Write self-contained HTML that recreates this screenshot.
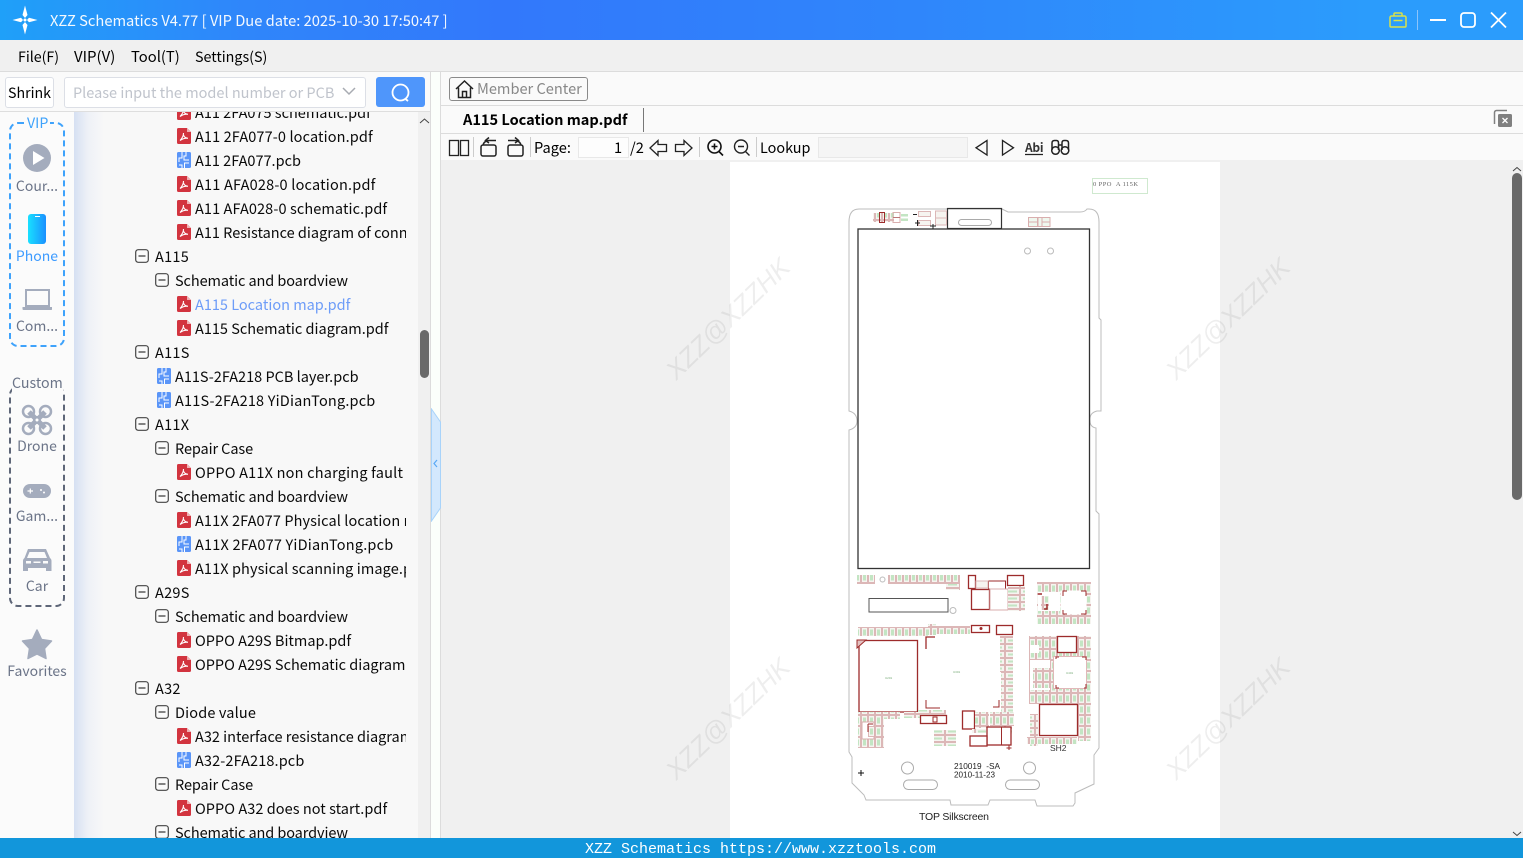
<!DOCTYPE html>
<html><head><meta charset="utf-8"><title>XZZ Schematics</title>
<style>
html,body{margin:0;padding:0;width:1523px;height:858px;overflow:hidden;background:#f0f0f0}
body{font-family:"Liberation Sans","Noto Sans CJK SC",sans-serif;font-size:15px;color:#000;position:relative}
.a{position:absolute}
.t{position:absolute;white-space:nowrap;line-height:20px;font-family:"Noto Sans CJK SC","Liberation Sans",sans-serif;font-size:14.6px}
.lab{position:absolute;left:0;width:74px;text-align:center;color:#6b7488;font-size:14px;line-height:20px;font-family:"Noto Sans CJK SC","Liberation Sans",sans-serif;white-space:nowrap}
#tree{position:absolute;left:74px;top:112px;width:344px;height:726px;overflow:hidden;background:linear-gradient(90deg,#d6e0f2 0,#eef1f7 14px,#f8f8f8 30px)}
#clip{position:absolute;left:0;top:-12px;width:332px;overflow:hidden}
.r{height:24px;line-height:26px;white-space:nowrap;position:relative;font-family:"Noto Sans CJK SC","Liberation Sans",sans-serif;font-size:14.5px;color:#0a0a0a}
.r svg{position:absolute;top:4px}
.l1{padding-left:81px;letter-spacing:.27px}.l1 svg{left:61px}
.l2{padding-left:101px}.l2 svg{left:81px}
.l3{padding-left:121px}.l3 svg{left:103px}
.l2p{padding-left:101px}.l2p svg{left:83px}
</style></head><body>
<svg width="0" height="0" style="position:absolute"><defs>
<symbol id="p" viewBox="0 0 14 16"><path d="M1.500 0H10L14 4V14.500A1.500 1.500 0 0 1 12.500 16H1.500A1.500 1.500 0 0 1 0 14.500V1.500A1.500 1.500 0 0 1 1.500 0Z" fill="#d2343f"/><path d="M10 0L14 4H10Z" fill="#f0b0b4"/><path d="M6.500 5C6.500 8 5 10.500 3 12.500M6.500 7C7 9 8.500 10 11 10.300C8.500 10 5.500 10.800 3 12.500" fill="none" stroke="#fff" stroke-width="1.100"/></symbol>
<symbol id="c" viewBox="0 0 14 16"><rect width="14" height="16" rx="1.500" fill="#5a95f8"/><path d="M5 0V6H2V10M9 0V4H7V8H12M7.500 16V11H12M2 13H5V16" fill="none" stroke="#fff" stroke-width="1"/></symbol>
<symbol id="m" viewBox="0 0 14 16"><rect x=".7" y="1.700" width="12.600" height="12.600" rx="2.500" fill="#fafafa" stroke="#444" stroke-width="1.200"/><path d="M3.500 8H10.500" stroke="#333" stroke-width="1.200"/></symbol>
<pattern id="cv" width="7" height="11" patternUnits="userSpaceOnUse"><rect width="7" height="11" fill="#f6f4f0"/><rect x=".5" y=".5" width="6" height="10" fill="none" stroke="#dcb7b7"/><rect x="2" y="2.500" width="3" height="6" fill="#c3e5c3"/></pattern>
<pattern id="ch" width="15" height="7" patternUnits="userSpaceOnUse"><rect width="15" height="7" fill="#f6f4f0"/><rect x=".5" y=".5" width="14" height="6" fill="none" stroke="#dcb7b7"/><rect x="3" y="2.500" width="9" height="2" fill="#c3e5c3"/></pattern>
</defs></svg>

<!-- title bar -->
<div class="a" style="left:0;top:0;width:1523px;height:40px;background:linear-gradient(90deg,#1fa0f9 0,#2f86fa 16%,#3278fb 33%,#2f86fb 60%,#2b9cfc 90%)"></div>
<svg class="a" style="left:12px;top:5px" width="28" height="30" viewBox="0 0 28 30"><path d="M13 .5L15.500 10L13 13L10.500 10ZM13 29.500L15.500 20L13 17L10.500 20ZM.5 15L9 12.800L11 15L9 17.200ZM25.500 15L17 12.800L15 15L17 17.200Z" fill="#fff"/><circle cx="13" cy="15" r="1.500" fill="#fff"/></svg>
<div class="t" style="left:50px;top:11px;color:#fff;font-size:14.7px;opacity:.95">XZZ Schematics V4.77 [ VIP Due date: 2025-10-30 17:50:47 ]</div>
<svg class="a" style="left:1380px;top:0" width="143" height="40" viewBox="1380 0 143 40" fill="none">
<path d="M1391.500 16H1404.500A1.500 1.500 0 0 1 1406 17.500V26A1 1 0 0 1 1405 27H1391A1 1 0 0 1 1390 26V17.500A1.500 1.500 0 0 1 1391.500 16ZM1394 16V14A1 1 0 0 1 1395 13H1401A1 1 0 0 1 1402 14V16M1393.500 20.500H1402.500" stroke="#d9e24a" stroke-width="1.500"/>
<path d="M1417.500 10V30" stroke="#8cc4fb"/>
<path d="M1430 20H1446" stroke="#fff" stroke-width="2"/>
<rect x="1461" y="13" width="14" height="14" rx="3" stroke="#fff" stroke-width="1.800"/>
<path d="M1491 12.500L1506 27.500M1506 12.500L1491 27.500" stroke="#fff" stroke-width="1.800"/>
</svg>

<!-- menu -->
<div class="a" style="left:0;top:40px;width:1523px;height:31px;background:#f0f0f0;border-bottom:1px solid #dcdcdc"></div>
<div class="t" style="left:18px;top:47px;font-size:14.200px">File(F)</div>
<div class="t" style="left:74px;top:47px;font-size:15px">VIP(V)</div>
<div class="t" style="left:131px;top:47px;font-size:14.800px">Tool(T)</div>
<div class="t" style="left:195px;top:47px;font-size:14.300px">Settings(S)</div>

<!-- search row -->
<div class="a" style="left:0;top:72px;width:430px;height:39px;background:#fafafa;border-bottom:1px solid #dedede"></div>
<div class="a" style="left:5px;top:77px;width:47px;height:29px;background:#fff;border:1px solid #dcdfe6;border-radius:3px"></div>
<div class="t" style="left:8px;top:83px;font-size:14.200px">Shrink</div>
<div class="a" style="left:64px;top:77px;width:300px;height:29px;background:#fff;border:1px solid #dcdfe6;border-radius:3px"></div>
<div class="t" style="left:73px;top:83px;color:#c0c4cc;font-size:14.500px">Please input the model number or PCB</div>
<svg class="a" style="left:342px;top:86px" width="14" height="12" fill="none"><path d="M1 2L7 8L13 2" stroke="#a8abb2" stroke-width="1.500"/></svg>
<div class="a" style="left:376px;top:77px;width:49px;height:30px;background:#4f96fb;border-radius:3px"></div>
<svg class="a" style="left:390px;top:82px" width="22" height="22" fill="none"><circle cx="10.500" cy="10.500" r="8" stroke="#fff" stroke-width="1.800"/><path d="M15.500 17L18 19" stroke="#fff" stroke-width="1.800"/></svg>

<!-- sidebar -->
<div class="a" style="left:0;top:112px;width:74px;height:726px;background:#fbfbfb"></div>
<div class="a" style="left:9px;top:122px;width:52px;height:221px;border:2px dashed #3ea2fb;border-radius:9px"></div>
<div class="t" style="left:25px;top:113px;color:#3ea2fb;background:#fbfbfb;padding:0 2px;font-size:14.200px">VIP</div>
<div class="a" style="left:9px;top:386px;width:52px;height:217px;border:2px dashed #5e6678;border-radius:9px"></div>
<div class="t" style="left:12px;top:373px;color:#6b7488;background:#fbfbfb;font-size:14.200px">Custom</div>
<svg class="a" style="left:0;top:112px" width="74" height="560" viewBox="0 112 74 560">
<defs><linearGradient id="ph" x1="0" x2="1"><stop offset="0" stop-color="#19e0ff"/><stop offset="1" stop-color="#1a90ff"/></linearGradient></defs>
<circle cx="37" cy="158" r="14" fill="#a4acbd"/><path d="M33 151V165L44.500 158Z" fill="#fff"/>
<rect x="28" y="214" width="18" height="30" rx="3" fill="url(#ph)"/><rect x="35" y="216" width="5" height="1" fill="#fff"/>
<path d="M26 290H49V306H26Z" fill="none" stroke="#a4acbd" stroke-width="2"/><path d="M22.500 307H52V309.500Q52 310 51 310H24Q22.500 310 22.500 309Z" fill="#a4acbd"/>
<g fill="none" stroke="#a4acbd"><circle cx="28.500" cy="411.500" r="5.500" stroke-width="2.500"/><circle cx="45.500" cy="411.500" r="5.500" stroke-width="2.500"/><circle cx="28.500" cy="428.500" r="5.500" stroke-width="2.500"/><circle cx="45.500" cy="428.500" r="5.500" stroke-width="2.500"/><path d="M29 412L45 428M45 412L29 428" stroke-width="5"/></g><circle cx="37" cy="420" r="4" fill="#a4acbd"/><circle cx="37" cy="420" r="1.500" fill="#fff"/>
<rect x="23" y="484" width="28" height="14" rx="7" fill="#a4acbd"/><path d="M27.500 491H33M30.300 488.500V493.500" stroke="#fff" stroke-width="1.200"/><circle cx="41" cy="490" r="1" fill="#fff"/><circle cx="44" cy="492.500" r="1" fill="#fff"/>
<path d="M28 549H46L50 558Q51.500 559 51.500 561V571H46V568H28V571H23V561Q23 559 24.500 558Z" fill="#a4acbd"/><path d="M29.500 552H44.500L47 558H27Z" fill="#fbfbfb"/><rect x="26" y="561" width="5" height="2.500" fill="#fbfbfb"/><rect x="43" y="561" width="5" height="2.500" fill="#fbfbfb"/><rect x="33.500" y="561.500" width="7" height="1.500" fill="#fbfbfb"/>
<path d="M37 630L41.500 639.500L51.500 641L44.500 648.500L46 658.500L37 654L28 658.500L29.500 648.500L22.500 641L32.500 639.500Z" fill="#a4acbd" stroke="#a4acbd" stroke-width="1.500" stroke-linejoin="round"/>
</svg>
<div class="lab" style="top:176px">Cour...</div>
<div class="lab" style="top:246px;color:#3d9bff">Phone</div>
<div class="lab" style="top:316px">Com...</div>
<div class="lab" style="top:436px">Drone</div>
<div class="lab" style="top:506px">Gam...</div>
<div class="lab" style="top:576px">Car</div>
<div class="lab" style="top:661px">Favorites</div>

<!-- tree -->
<div id="tree"><div id="clip">
<div class="r l3"><svg width="14" height="16"><use href="#p"/></svg>A11 2FA075 schematic.pdf</div>
<div class="r l3" style="letter-spacing:.12px"><svg width="14" height="16"><use href="#p"/></svg>A11 2FA077-0 location.pdf</div>
<div class="r l3"><svg width="14" height="16"><use href="#c"/></svg>A11 2FA077.pcb</div>
<div class="r l3" style="letter-spacing:.2px"><svg width="14" height="16"><use href="#p"/></svg>A11 AFA028-0 location.pdf</div>
<div class="r l3" style="letter-spacing:.1px"><svg width="14" height="16"><use href="#p"/></svg>A11 AFA028-0 schematic.pdf</div>
<div class="r l3"><svg width="14" height="16"><use href="#p"/></svg>A11 Resistance diagram of connector.pdf</div>
<div class="r l1"><svg width="14" height="16"><use href="#m"/></svg>A115</div>
<div class="r l2" style="letter-spacing:-.09px"><svg width="14" height="16"><use href="#m"/></svg>Schematic and boardview</div>
<div class="r l3" style="color:#6d9cf8"><svg width="14" height="16"><use href="#p"/></svg>A115 Location map.pdf</div>
<div class="r l3"><svg width="14" height="16"><use href="#p"/></svg>A115 Schematic diagram.pdf</div>
<div class="r l1"><svg width="14" height="16"><use href="#m"/></svg>A11S</div>
<div class="r l2p"><svg width="14" height="16"><use href="#c"/></svg>A11S-2FA218 PCB layer.pcb</div>
<div class="r l2p" style="letter-spacing:.19px"><svg width="14" height="16"><use href="#c"/></svg>A11S-2FA218 YiDianTong.pcb</div>
<div class="r l1"><svg width="14" height="16"><use href="#m"/></svg>A11X</div>
<div class="r l2" style="letter-spacing:-.1px"><svg width="14" height="16"><use href="#m"/></svg>Repair Case</div>
<div class="r l3" style="letter-spacing:.2px"><svg width="14" height="16"><use href="#p"/></svg>OPPO A11X non charging fault</div>
<div class="r l2" style="letter-spacing:-.09px"><svg width="14" height="16"><use href="#m"/></svg>Schematic and boardview</div>
<div class="r l3" style="letter-spacing:.1px"><svg width="14" height="16"><use href="#p"/></svg>A11X 2FA077 Physical location map.pdf</div>
<div class="r l3" style="letter-spacing:.2px"><svg width="14" height="16"><use href="#c"/></svg>A11X 2FA077 YiDianTong.pcb</div>
<div class="r l3" style="letter-spacing:.1px"><svg width="14" height="16"><use href="#p"/></svg>A11X physical scanning image.pdf</div>
<div class="r l1"><svg width="14" height="16"><use href="#m"/></svg>A29S</div>
<div class="r l2" style="letter-spacing:-.09px"><svg width="14" height="16"><use href="#m"/></svg>Schematic and boardview</div>
<div class="r l3"><svg width="14" height="16"><use href="#p"/></svg>OPPO A29S Bitmap.pdf</div>
<div class="r l3"><svg width="14" height="16"><use href="#p"/></svg>OPPO A29S Schematic diagram.pdf</div>
<div class="r l1"><svg width="14" height="16"><use href="#m"/></svg>A32</div>
<div class="r l2" style="letter-spacing:.15px"><svg width="14" height="16"><use href="#m"/></svg>Diode value</div>
<div class="r l3"><svg width="14" height="16"><use href="#p"/></svg>A32 interface resistance diagram.pdf</div>
<div class="r l3" style="letter-spacing:.12px"><svg width="14" height="16"><use href="#c"/></svg>A32-2FA218.pcb</div>
<div class="r l2" style="letter-spacing:-.1px"><svg width="14" height="16"><use href="#m"/></svg>Repair Case</div>
<div class="r l3" style="letter-spacing:.05px"><svg width="14" height="16"><use href="#p"/></svg>OPPO A32 does not start.pdf</div>
<div class="r l2" style="letter-spacing:-.09px"><svg width="14" height="16"><use href="#m"/></svg>Schematic and boardview</div>
</div></div>
<!-- tree scrollbar -->
<div class="a" style="left:418px;top:112px;width:12px;height:726px;background:#f0f0f0"></div>
<svg class="a" style="left:418px;top:114px" width="13" height="12" fill="none"><path d="M2 9L6.500 5L11 9" stroke="#444"/></svg>
<div class="a" style="left:420px;top:330px;width:9px;height:48px;background:#696969;border-radius:5px"></div>
<!-- divider -->
<div class="a" style="left:430px;top:72px;width:9px;height:766px;background:#fbfffb;border-left:1px solid #dcdcdc;border-right:1px solid #dcdcdc"></div>
<svg class="a" style="left:431px;top:408px" width="10" height="114"><path d="M0.500 1L9.500 14V100L0.500 113Z" fill="#d3e8fd" stroke="#a8d3fa"/><path d="M6 52L3 55.500L6 59" fill="none" stroke="#5aa9f5" stroke-width="1.200"/></svg>

<!-- right header -->
<div class="a" style="left:441px;top:72px;width:1082px;height:33px;background:#fafafa;border-bottom:1px solid #dcdcdc"></div>
<div class="a" style="left:441px;top:106px;width:1082px;height:27px;background:#fafafa;border-bottom:1px solid #dcdcdc"></div>
<div class="a" style="left:441px;top:134px;width:1082px;height:26px;background:#fafafa"></div>
<div class="a" style="left:449px;top:77px;width:137px;height:22px;border:1px solid #8a8a8a;border-radius:3px;background:#fafafa"></div>
<svg class="a" style="left:455px;top:79px" width="20" height="20" fill="none" stroke="#222" stroke-width="1.500"><path d="M1 10L9.500 2L18 10M3.500 8.500V18.500H15.500V8.500M7.500 18.500V12.500H11.500V18.500"/></svg>
<div class="t" style="left:477px;top:79px;color:#888;font-size:14.600px">Member Center</div>
<div class="t" style="left:463px;top:110px;font-weight:bold;font-size:14.560px">A115 Location map.pdf</div>
<div class="a" style="left:643px;top:108px;width:1px;height:24px;background:#777"></div>
<svg class="a" style="left:1493px;top:109px" width="20" height="20"><path d="M1.500 15V3.500A2 2 0 0 1 3.500 1.500H14" fill="none" stroke="#808080" stroke-width="1.500"/><rect x="5" y="5" width="14" height="13" rx="1.500" fill="#808080"/><path d="M9.500 9L14.500 14M14.500 9L9.500 14" stroke="#fff" stroke-width="1.300"/></svg>

<!-- toolbar -->
<svg class="a" style="left:442px;top:134px" width="640" height="27" viewBox="442 134 640 27" fill="none" stroke="#222" stroke-width="1.500">
<rect x="449.500" y="140.500" width="9" height="15" stroke-width="1.300"/><rect x="460.500" y="140.500" width="8" height="15" stroke-width="1.300"/>
<path d="M473.500 137V157M530.500 137V157M699.500 137V157M756.500 137V157" stroke="#ccc" stroke-width="1"/>
<rect x="481" y="145" width="15" height="11" rx="2"/><path d="M483 145Q484 141 489 140.500H496M489 137.500L485.500 140.500L489 143"/>
<rect x="508" y="145" width="15" height="11" rx="2"/><path d="M521 145Q520 141 515 140.500H508M515 137.500L518.500 140.500L515 143"/>
<path d="M650 148L658 140.500V144.500H666.500V151.500H658V155.500Z" stroke-width="1.300"/>
<path d="M692 148L684 140.500V144.500H675.500V151.500H684V155.500Z" stroke-width="1.300"/>
<circle cx="714.500" cy="146.500" r="6.500" stroke="#111" stroke-width="1.600"/><path d="M719 151.500L723 155.500M711.500 146.500H717.500M714.500 143.500V149.500" stroke="#111" stroke-width="1.600"/>
<circle cx="741" cy="146.500" r="6.500" stroke-width="1.400"/><path d="M745.500 151.500L749.500 155.500M738 146.500H744" stroke-width="1.400"/>
<path d="M987 140.500V155L976 147.800Z" stroke-width="1.300"/><path d="M1002.500 140.500V155L1013.500 147.800Z" stroke-width="1.300"/>
<path d="M1025 154.500H1043" stroke-width="1.200"/>
<circle cx="1055.500" cy="150.500" r="3.800"/><circle cx="1065" cy="150.500" r="3.800"/><path d="M1052 150V143Q1052 140.500 1054.500 140.500H1056.500Q1058.500 140.500 1058.500 143V150M1062 150V143Q1062 140.500 1064 140.500H1066Q1068.500 140.500 1068.500 143V150M1058.500 145H1062"/>
</svg>
<div class="t" style="left:534px;top:138px">Page:</div>
<div class="a" style="left:578px;top:137px;width:49px;height:19px;background:#fdfdfd;border:1px solid #e8e8e8"></div>
<div class="t" style="left:614px;top:138px">1</div>
<div class="t" style="left:630px;top:138px">/2</div>
<div class="t" style="left:760px;top:138px;font-size:14.400px">Lookup</div>
<div class="a" style="left:818px;top:137px;width:148px;height:19px;background:#f5f5f5;border:1px solid #e8e8e8"></div>
<div class="t" style="left:1025px;top:138px;font-size:12px;font-weight:bold;color:#333;letter-spacing:-.3px">Abi</div>

<!-- viewer -->
<div class="a" style="left:441px;top:160px;width:1070px;height:678px;background:#f0f0f0"></div>
<div class="a" style="left:730px;top:162px;width:490px;height:676px;background:#fff"></div>

<svg class="a" style="left:442px;top:160px" width="1069" height="678" viewBox="442 160 1069 678" fill="none">
<!-- label box -->
<rect x="1092.500" y="178.500" width="55" height="15" stroke="#cfe9cf"/>
<text x="1093" y="186" font-family="Liberation Serif,serif" font-size="6.500" fill="#666" letter-spacing=".4">0 PPO&#160;&#160;A 115K</text>
<!-- outline -->
<path d="M859 209H947V209M1002 209L1008 212H1080Q1085 212 1087 209H1089Q1099 209 1099 222V318L1101 320V411H1097Q1089 413 1090 421Q1090 427 1096 428V511L1099 514V748L1094 755V784L1075 793V803L1073 806H1037L1035 800H990L988 805H951L950 800H866L864 795L852 783V757L849 752V430Q857 428 857 421Q857 413 849 411V222Q849 209 859 209Z" stroke="#bcbcbc" stroke-width="1"/>
<!-- top notch -->
<rect x="947.500" y="208.500" width="54" height="20" stroke="#333" stroke-width="1.200"/>
<rect x="958.500" y="219.500" width="33" height="6" rx="3" stroke="#aaa"/>
<!-- screen -->
<rect x="858" y="229" width="231.500" height="339.500" stroke="#333" stroke-width="1.300"/>
<circle cx="1027.500" cy="251" r="3" stroke="#bbb"/><circle cx="1050.500" cy="251" r="3" stroke="#bbb"/>
<!-- top comps -->
<rect x="873" y="213" width="21" height="9" fill="url(#cv)"/>
<rect x="879.500" y="212.500" width="5" height="10" stroke="#9d2b2b"/>
<rect x="893" y="212.500" width="7" height="10" stroke="#d9aeae"/>
<path d="M893 217.500H900" stroke="#b77"/><rect x="901" y="214" width="7" height="2.500" fill="#c3e5c3"/><rect x="901" y="218.500" width="7" height="2.500" fill="#c3e5c3"/>
<rect x="918.500" y="211.500" width="12" height="5" fill="#f6f4f0" stroke="#dcb7b7"/><rect x="918.500" y="220.500" width="12" height="5" fill="#f6f4f0" stroke="#dcb7b7"/>
<path d="M913 214.500H917M915 223H920M917.500 220V226M933 224V229M936 226H930" stroke="#222"/>
<rect x="935.500" y="211" width="11" height="7" fill="#f6f4f0" stroke="#dcb7b7"/><rect x="935.500" y="218" width="11" height="7" fill="#f6f4f0" stroke="#dcb7b7"/>
<g fill="#eef7ee" stroke="#d9aeae"><rect x="1028.500" y="217.500" width="9" height="4.500"/><rect x="1028.500" y="222" width="9" height="4.500"/><rect x="1038" y="217.500" width="4" height="9"/><rect x="1042" y="217.500" width="8" height="4.500"/><rect x="1042" y="222" width="8" height="4.500"/></g>
<!-- row under screen -->
<rect x="857" y="575" width="18" height="9" fill="url(#cv)"/><circle cx="882.500" cy="579.500" r="2.500" stroke="#bbb"/>
<rect x="888" y="575" width="72" height="9" fill="url(#cv)"/><rect x="946" y="584" width="14" height="6" fill="url(#ch)"/>
<rect x="869" y="598.500" width="79" height="13.500" stroke="#555" stroke-width="1"/><circle cx="953" cy="610.500" r="3" stroke="#bbb"/>
<!-- block 2 -->
<rect x="968.500" y="575.500" width="7" height="13" stroke="#9d2b2b" stroke-width="1.300"/>
<rect x="971.500" y="589.500" width="18" height="20" stroke="#9d2b2b" stroke-width="1.300"/>
<rect x="988.500" y="581" width="17" height="8" stroke="#9d2b2b" stroke-width="1"/>
<rect x="1007.500" y="575.500" width="16" height="10" stroke="#9d2b2b" stroke-width="1.300"/>
<rect x="976" y="581" width="12" height="7" fill="#f6f4f0" stroke="#dcb7b7"/><rect x="990" y="589" width="18" height="21" stroke="#d9aeae"/>
<rect x="1008" y="586" width="17" height="25" fill="url(#ch)"/>
<!-- block 3 -->
<rect x="1037" y="582" width="54" height="42" fill="url(#cv)"/>
<rect x="1061" y="591" width="25" height="23" fill="#fff" stroke="#fff"/>
<path d="M1063 596V591H1067M1081 591H1086V596M1063 610V614H1067M1081 614H1086V610" stroke="#9d2b2b"/>
<rect x="1038" y="592" width="22" height="19" fill="#fff"/><rect x="1041" y="596" width="8" height="14" fill="url(#cv)"/>
<path d="M1038 594H1042M1044 609H1047V604" stroke="#9d2b2b" stroke-width="1.500"/>
<!-- big row -->
<rect x="858" y="627" width="70" height="9" fill="url(#cv)"/><rect x="928" y="624" width="8" height="11" fill="url(#cv)"/>
<rect x="936" y="626" width="34" height="8" fill="url(#cv)"/>
<rect x="971.500" y="625.500" width="18" height="7" stroke="#9d2b2b" stroke-width="1.300"/>
<circle cx="981" cy="628.500" r="1.500" fill="#9d2b2b"/>
<rect x="996.500" y="625.500" width="16" height="9" stroke="#9d2b2b" stroke-width="1.300"/>
<!-- main chips -->
<rect x="859" y="640.500" width="58.500" height="71.500" stroke="#9d2b2b" stroke-width="1.300"/>
<path d="M857 640H866L857 648Z" fill="#e3c1c1" stroke="#9d2b2b"/>
<text x="885" y="679" font-size="3" fill="#7a7">U201</text>
<path d="M926 649V637H935" stroke="#9d2b2b" stroke-width="1.300"/>
<path d="M926 700V708H940M999 700V707H993" stroke="#9d2b2b" stroke-width="1"/>
<text x="953" y="673" font-size="3" fill="#7a7">U301</text>
<rect x="1000" y="636" width="13" height="36" fill="url(#ch)"/><rect x="1001" y="672" width="12" height="40" fill="url(#ch)"/>
<rect x="999" y="712" width="13" height="22" fill="url(#ch)"/>
<!-- right stack -->
<rect x="1029" y="636" width="62" height="68" fill="url(#cv)"/>
<rect x="1053.500" y="656.500" width="33" height="32" fill="#fff" stroke="#e0b8b8"/>
<path d="M1056 659V657H1059M1082 657H1086V660M1056 685V688H1059M1084 688H1086V684" stroke="#9d2b2b"/>
<text x="1066" y="674" font-size="3" fill="#7a7">U401</text>
<rect x="1057.500" y="636.500" width="19" height="16" fill="#fff" stroke="#9d2b2b" stroke-width="1.300"/>
<rect x="1030" y="645" width="9" height="8" fill="#fff"/><rect x="1030" y="660" width="20" height="30" fill="#fff"/>
<rect x="1033" y="668" width="17" height="20" fill="url(#cv)"/>
<rect x="1031" y="690" width="60" height="12" fill="url(#cv)"/>
<rect x="1030" y="714" width="8" height="32" fill="url(#ch)"/>
<rect x="1078" y="703" width="13" height="38" fill="url(#cv)"/>
<rect x="1027" y="737" width="50" height="7" fill="url(#cv)"/>
<rect x="1039.500" y="704.500" width="38" height="31" fill="#fff" stroke="#9d2b2b" stroke-width="1.300"/>
<text x="1050" y="751" font-family="Liberation Sans,sans-serif" font-size="8.500" fill="#333">SH2</text>
<!-- lower left -->
<rect x="858" y="712" width="26" height="36" fill="url(#cv)"/><rect x="862" y="722" width="12" height="17" fill="#fff" stroke="#d9aeae"/>
<rect x="868" y="726" width="6" height="11" fill="url(#cv)"/>
<path d="M868 724V732M868 724H873" stroke="#9d2b2b"/>
<rect x="884" y="712" width="16" height="7" fill="url(#cv)"/><rect x="904" y="712" width="16" height="6" fill="url(#ch)"/>
<!-- lower mid -->
<rect x="920.500" y="715.500" width="26" height="8" stroke="#9d2b2b" stroke-width="1.300"/>
<rect x="933" y="717" width="4" height="5" stroke="#9d2b2b"/>
<rect x="918" y="710" width="28" height="5" fill="url(#ch)"/>
<rect x="962.500" y="711" width="12" height="18" stroke="#9d2b2b" stroke-width="1.300"/>
<rect x="975" y="712" width="14" height="16" fill="url(#cv)"/><rect x="990" y="712" width="24" height="14" fill="url(#cv)"/>
<rect x="934" y="730" width="22" height="16" fill="url(#ch)"/>
<rect x="987" y="727" width="24" height="18" fill="#fff" stroke="#9d2b2b" stroke-width="1.300"/><path d="M1001.500 727V745" stroke="#9d2b2b"/>
<rect x="970" y="736" width="17" height="10" fill="#fff" stroke="#9d2b2b" stroke-width="1.300"/>
<rect x="972" y="729" width="14" height="4" fill="url(#ch)"/>
<path d="M1009 745V750M1006.500 748H1011.500" stroke="#9d2b2b"/>
<!-- bottom -->
<circle cx="907.500" cy="768" r="6" stroke="#aaa"/><circle cx="1029.500" cy="768" r="6" stroke="#aaa"/>
<rect x="903.500" y="780" width="34" height="9.500" rx="4.700" stroke="#aaa"/><rect x="1005.500" y="780" width="34" height="9.500" rx="4.700" stroke="#aaa"/>
<path d="M861 770V776M858 773H864" stroke="#111"/>
<text x="954" y="769" font-family="Liberation Sans,sans-serif" font-size="8" fill="#222" textLength="46" lengthAdjust="spacingAndGlyphs">210019&#160;&#160;-SA</text>
<text x="954" y="777.500" font-family="Liberation Sans,sans-serif" font-size="8" fill="#222" textLength="41" lengthAdjust="spacingAndGlyphs">2010-11-23</text>
<text x="919" y="820" font-family="Liberation Sans,sans-serif" font-size="10.500" fill="#222" textLength="70" lengthAdjust="spacing">TOP Silkscreen</text>
<!-- watermarks -->
<g font-family="Liberation Sans,sans-serif" font-size="26" fill="rgba(0,0,0,.065)" text-anchor="middle" style="font-style:italic">
<text transform="translate(734,325) rotate(-44)">XZZ@XZZHK</text>
<text transform="translate(1234,325) rotate(-44)">XZZ@XZZHK</text>
<text transform="translate(734,725) rotate(-44)">XZZ@XZZHK</text>
<text transform="translate(1234,725) rotate(-44)">XZZ@XZZHK</text>
</g>
</svg>

<!-- right scrollbar -->
<div class="a" style="left:1511px;top:160px;width:12px;height:678px;background:#f0f0f0"></div>
<svg class="a" style="left:1511px;top:164px" width="12" height="10" fill="none"><path d="M2 7L6 3.500L10 7" stroke="#444"/></svg>
<svg class="a" style="left:1511px;top:830px" width="12" height="8" fill="none"><path d="M2 2L6 5.500L10 2" stroke="#444"/></svg>
<div class="a" style="left:1512px;top:173px;width:10px;height:327px;background:#696969;border-radius:5px"></div>

<!-- footer -->
<div class="a" style="left:0;top:838px;width:1523px;height:20px;background:#1296db"></div>
<div class="a" style="left:585px;top:840px;color:#fff;font-family:'Liberation Mono',monospace;font-size:15px;line-height:19px;white-space:nowrap">XZZ Schematics https://www.xzztools.com</div>
</body></html>
